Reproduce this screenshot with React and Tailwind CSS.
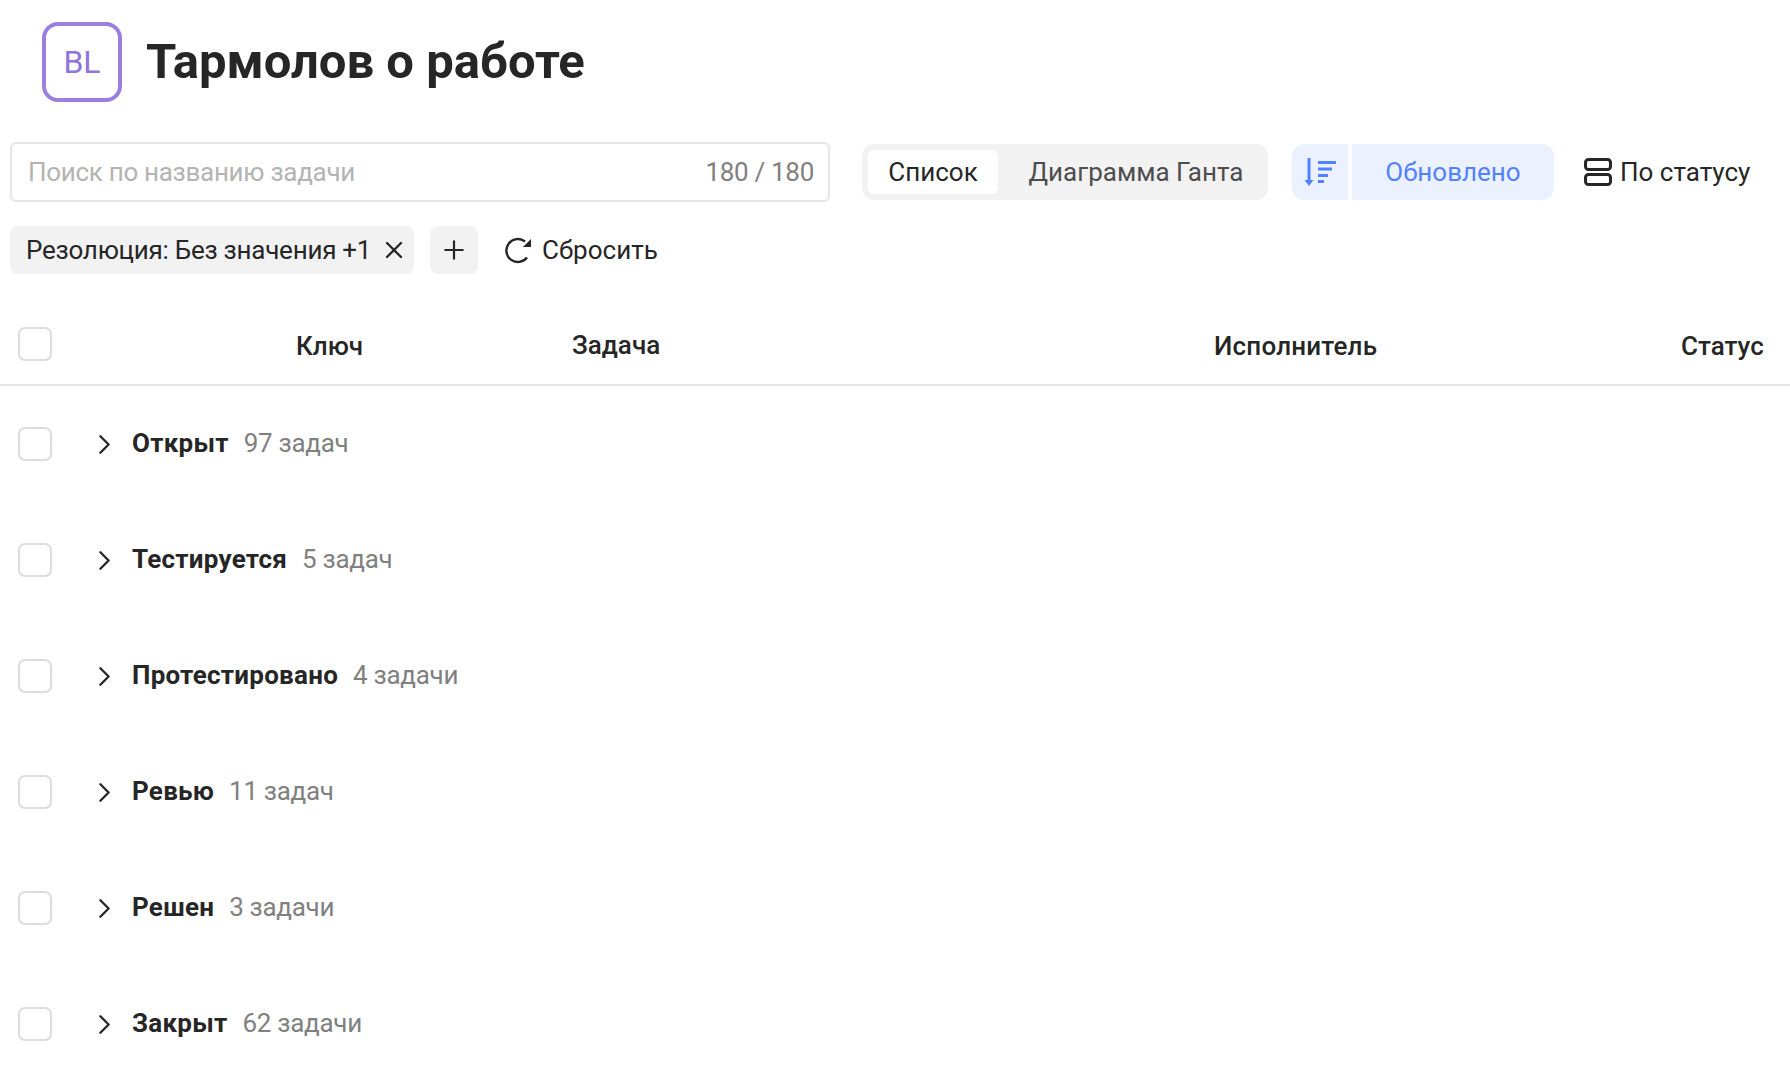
import { X, Plus, ChevronRight } from 'lucide-react'

const groups = [
  { name: 'Открыт', count: '97 задач' },
  { name: 'Тестируется', count: '5 задач' },
  { name: 'Протестировано', count: '4 задачи' },
  { name: 'Ревью', count: '11 задач' },
  { name: 'Решен', count: '3 задачи' },
  { name: 'Закрыт', count: '62 задачи' },
]

function Checkbox() {
  return <div className="w-[34px] h-[34px] rounded-[7px] border-2 border-[#dcdcdc] bg-white shrink-0" />
}

function SortIcon() {
  return (
    <svg width="32" height="30" viewBox="0 0 32 30" fill="none" stroke="#5282ff" strokeWidth="3">
      <path d="M5 1v24" />
      <path d="M0.5 23h9L5 29z" fill="#5282ff" stroke="none" />
      <path d="M14 5.5h18M14 12h14M14 18.500h10M14 24.500h6" />
    </svg>
  )
}

function GroupIcon() {
  return (
    <svg width="28" height="28" viewBox="0 0 28 28" fill="none" stroke="#262626" strokeWidth="3">
      <rect x="1.5" y="1.5" width="25" height="10" rx="3" />
      <rect x="1.500" y="16.500" width="25" height="10" rx="3" />
    </svg>
  )
}

function ResetIcon() {
  return (
    <svg width="30" height="30" viewBox="0 0 30 30" fill="none" stroke="#262626" strokeWidth="2.4">
      <path d="M22 6.500A11.500 11.500 0 1 0 24 22.500" />
      <path d="M28 4v8h-8z" fill="#262626" stroke="none" />
    </svg>
  )
}

export default function App() {
  return (
    <div className="w-[1790px] h-[1066px] overflow-hidden bg-white text-[#262626] font-['Roboto',sans-serif]">
      {/* Title */}
      <div className="flex items-center gap-6 pl-[42px] pt-[22px]">
        <div className="w-[80px] h-[80px] rounded-[16px] border-[4px] border-[#9a7fe0] flex items-center justify-center text-[#8f74dc] text-[32px]">
          BL
        </div>
        <h1 className="text-[49px] font-bold leading-none -mt-[1px]">Тармолов о работе</h1>
      </div>

      {/* Toolbar */}
      <div className="flex items-center pl-[10px] mt-[40px]">
        <div className="w-[820px] h-[60px] rounded-[6px] border-2 border-[#e5e5e5] flex items-center justify-between pl-[16px] pr-[14px] text-[26px] tracking-[-0.3px]">
          <span className="text-[#b3b3b3]">Поиск по названию задачи</span>
          <span className="text-[#808080]">180 / 180</span>
        </div>
        <div className="ml-[32px] w-[406px] h-[56px] rounded-[12px] bg-[#f2f2f2] flex items-center p-[6px] text-[26px]">
          <div className="w-[130px] h-full rounded-[6px] bg-white flex items-center justify-center">Список</div>
          <div className="flex-1 text-center pl-[12px] text-[#4d4d4d]">Диаграмма Ганта</div>
        </div>
        <div className="ml-[24px] flex items-center gap-[4px] text-[26px] text-[#5282ff]">
          <div className="w-[56px] h-[56px] rounded-l-[12px] bg-[#ebf1fe] flex items-center justify-center">
            <SortIcon />
          </div>
          <div className="w-[202px] h-[56px] rounded-r-[12px] bg-[#ebf1fe] flex items-center justify-center">Обновлено</div>
        </div>
        <div className="ml-[30px] flex items-center gap-[8px] text-[26px]">
          <GroupIcon />
          <span>По статусу</span>
        </div>
      </div>

      {/* Filters */}
      <div className="flex items-center pl-[10px] mt-[24px]">
        <div className="w-[404px] h-[48px] rounded-[8px] bg-[#f2f2f2] flex items-center justify-between pl-[16px] pr-[6px] text-[26px] tracking-[-0.25px]">
          <span>Резолюция: Без значения +1</span>
          <X size={28} strokeWidth={2} />
        </div>
        <div className="ml-[16px] w-[48px] h-[48px] rounded-[8px] bg-[#f2f2f2] flex items-center justify-center">
          <Plus size={30} strokeWidth={1.75} />
        </div>
        <div className="ml-[25px] flex items-center gap-[9px] text-[26px]">
          <ResetIcon />
          <span>Сбросить</span>
        </div>
      </div>

      {/* Table head */}
      <div className="flex items-center h-[108px] pt-[30px] mt-[4px] border-b-2 border-[#e5e5e5] text-[26px] font-medium">
        <div className="w-[296px] pl-[18px] -mt-[4px]"><Checkbox /></div>
        <div className="w-[276px]">Ключ</div>
        <div className="w-[642px] -mt-[2px]">Задача</div>
        <div className="w-[467px] tracking-[0.2px]">Исполнитель</div>
        <div>Статус</div>
      </div>

      {/* Groups */}
      <div className="flex flex-col">
        {groups.map((g) => (
          <div key={g.name} className="flex items-center h-[116px] pl-[18px] text-[26px]">
            <Checkbox />
            <ChevronRight size={33} strokeWidth={1.7} className="ml-[36px]" />
            <span className="ml-[11px] -mt-[2px] font-bold tracking-[0.25px]">{g.name}</span>
            <span className="ml-[15px] -mt-[2px] text-[#808080] tracking-[-0.3px]">{g.count}</span>
          </div>
        ))}
      </div>
    </div>
  )
}
